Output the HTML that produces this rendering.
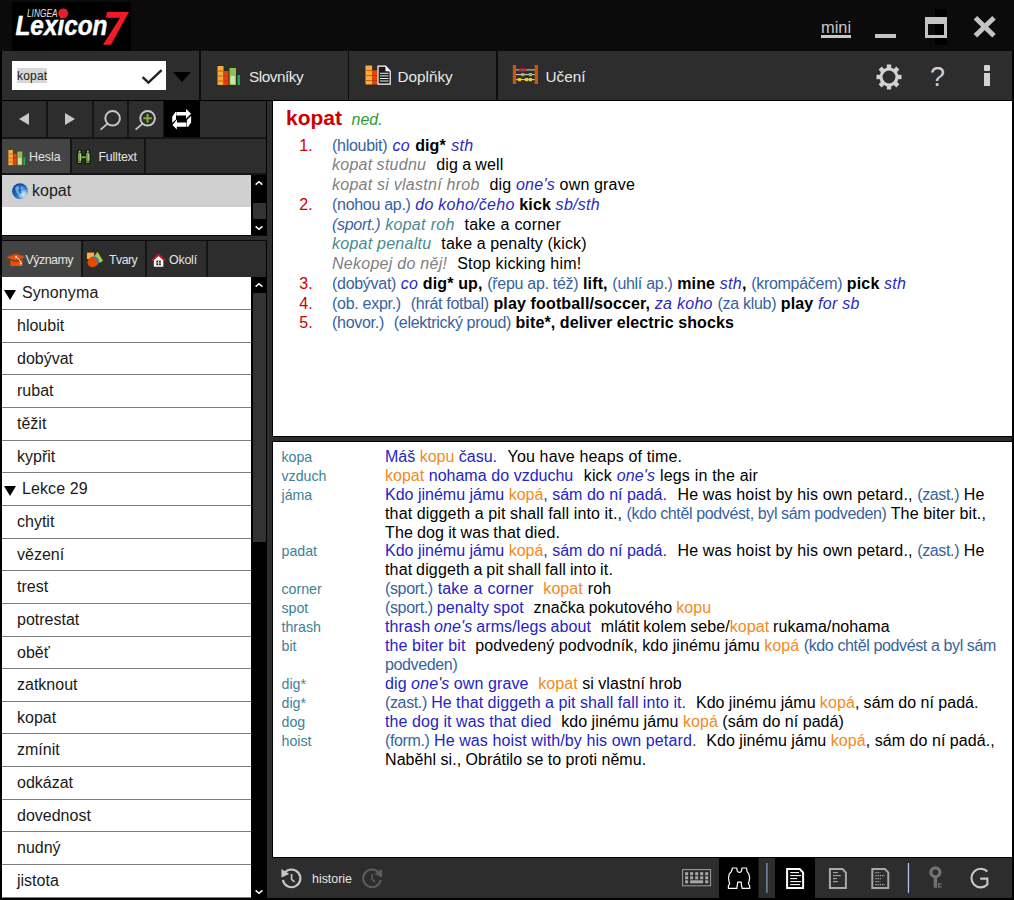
<!DOCTYPE html>
<html>
<head>
<meta charset="utf-8">
<title>Lingea Lexicon 7</title>
<style>
*{box-sizing:border-box;margin:0;padding:0}
html,body{width:1014px;height:900px;overflow:hidden;background:#000}
body{font-family:"Liberation Sans",sans-serif;position:relative;color:#000}
.abs{position:absolute}
#title{left:0;top:0;width:1014px;height:51px;background:#0b0b0b}
#logo{left:12px;top:2px;width:119px;height:49px;background:#000}
#toolbar{left:2px;top:51px;width:1010px;height:49px;background:#2d2d2d}
.vsep{position:absolute;width:1.6px;background:#0c0c0c;top:0;height:49px;margin-left:0.4px}
.tbtn{position:absolute;top:0;height:49px;color:#e8e8e8;font-size:15.3px;line-height:51px}
#search{left:10px;top:10px;width:154px;height:29px;background:#fff}
#search span{position:absolute;left:5px;top:7px;height:15px;line-height:17px;letter-spacing:0.2px;font-size:12px;background:#d8d8d8;color:#222}
#mini{left:821px;top:12px;font-size:16.4px;line-height:30px;color:#c8c8c8;border-bottom:3px solid #c8c8c8;height:26px;width:30px;overflow:visible;white-space:nowrap}
#left{left:2px;top:101px;width:264px;height:799px;background:#2d2d2d}
#nav{left:0;top:0;width:264px;height:36px}
.nbtn{position:absolute;top:0;height:36px;border-right:2px solid #151515}
#tabs1{left:0;top:38px;width:264px;height:35px;border-top:0}
.tab{position:absolute;top:0;height:35px;color:#e4e4e4;font-size:12.4px;line-height:37.4px;border-right:2px solid #151515}
.tab.on{background:#444}
#list1{left:0;top:74px;width:249px;height:59.6px;background:#fff}
#list1 .sel{position:absolute;left:0;top:0;width:249px;height:32px;background:#d0d0d0}
.sb{position:absolute;background:#000;width:16px}
.thumb{position:absolute;left:1.5px;width:13px;background:#333}
#tabs2{left:0;top:140.4px;width:264px;height:35.5px}
#tabs2 .tab{line-height:39.4px}
#list2{left:0;top:176.3px;width:249px;height:624px;background:#fff;overflow:hidden}
.row{height:32.667px;border-bottom:1px solid #7c7c7c;font-size:16px;line-height:32px;padding-left:15px;color:#1a1a1a;white-space:nowrap;position:relative}
.row.h{padding-left:20px;letter-spacing:0.1px}
.row.h:before{content:"";position:absolute;left:1.5px;top:12.5px;border-left:6.5px solid transparent;border-right:6.5px solid transparent;border-top:10.5px solid #000}
#gap{left:267px;top:101px;width:6px;height:757px;background:#2d2d2d;border-right:1px solid #000}
#p1{left:273px;top:100px;width:739px;height:337px;background:#fff;border-top:1px solid #000;border-bottom:1px solid #000}
#p2{left:273px;top:441px;width:739px;height:417px;background:#fff;border-top:1px solid #000;border-bottom:1px solid #000}
#hgap{left:267px;top:437px;width:745px;height:4px;background:#2d2d2d}
#rgap{left:1012px;top:51px;width:2px;height:849px;background:#000}
#bottom{left:273px;top:858px;width:739px;height:40px;background:#2d2d2d}

.hw{left:13px;top:4.5px;white-space:nowrap;height:24px;line-height:24px}
.hw b{font-size:21px;color:#cc0000}
.hw i{font-size:16px;color:#2f9a2f;margin-left:9.5px}
.e1{left:59px;top:34.6px;font-size:16px;white-space:nowrap;color:#000;letter-spacing:0.19px}
.ln{height:19.76px;line-height:19.76px;position:relative}
.n{position:absolute;left:-32.7px;color:#cc0000;letter-spacing:0}
.g{color:#3762a0}
.e1 .g{letter-spacing:-0.29px}
.e1 b{letter-spacing:0.14px}
.e1 i{letter-spacing:0.27px}
i.b,.b{color:#2a2ac0}
i.x{color:#808080}
i.t{color:#4a8a8c}
.e1 .sp{display:inline-block;width:9.9px}
.e2 .sp{display:inline-block;width:9.7px}
.e2 .en .sp{width:10.5px}
.e2{left:112px;top:5.8px;font-size:16px;white-space:nowrap;color:#000}
.l2{height:18.94px;line-height:18.94px;position:relative}
.k{position:absolute;left:-103.5px;color:#3d8296;font-size:14.2px}
.c{color:#2424c4;letter-spacing:0}
.e2{letter-spacing:0.08px}
.l2.en{letter-spacing:0.15px}
.l2 .c{letter-spacing:0.12px}
.l2.en .c{letter-spacing:0}
.e2 .g{letter-spacing:-0.36px}
.e2 .k{letter-spacing:0}
.o{color:#f28a1e}
</style>
</head>
<body>
<div id="title" class="abs">
  <div class="abs" style="left:935px;top:9px;width:12px;height:36px;background:#000"></div>
  <div class="abs" id="mini">mini</div>
  <div class="abs" style="left:875px;top:34px;width:21px;height:4px;background:#c4c4c4"></div>
  <div class="abs" style="left:925px;top:17px;width:22px;height:21px;border:3px solid #c4c4c4;border-top-width:7px"></div>
  <svg class="abs" style="left:972px;top:14px" width="26" height="26" viewBox="0 0 26 26"><path d="M3.4 3.8 L22 21.8 M22 3.8 L3.4 21.8" stroke="#c4c4c4" stroke-width="5" fill="none"/></svg>
</div>
<div id="logo" class="abs">
  <svg width="119" height="49" viewBox="12 2 119 49" style="display:block">
    <text x="27" y="16.6" font-family="Liberation Sans, sans-serif" font-style="italic" font-size="10.2" fill="#e4e4e4" textLength="30.5" lengthAdjust="spacingAndGlyphs">LINGEA</text>
    <text x="15.5" y="34.7" font-family="Liberation Sans, sans-serif" font-style="italic" font-weight="bold" font-size="28" fill="#fff" textLength="92" lengthAdjust="spacingAndGlyphs" stroke="#fff" stroke-width="0.45">Lexicon</text>
    <circle cx="63.2" cy="13.3" r="4.9" fill="#ed1c24"/>
    <polygon points="107,12 129,12 111,44.75 103,44.75 120,17.75 105.9,17.75" fill="#ed1c24"/>
  </svg>
</div>
<div id="toolbar" class="abs">
  <div id="search" class="abs"><span>kopat</span>
    <svg class="abs" style="left:128px;top:7px" width="24" height="18" viewBox="0 0 24 18"><path d="M2.6 9.2 L8.4 14.6 L21.6 2.2" stroke="#222" stroke-width="2.4" fill="none"/></svg>
  </div>
  <div class="abs" style="left:171px;top:21px;width:0;height:0;border-left:9.5px solid transparent;border-right:9.5px solid transparent;border-top:10px solid #000"></div>
  <div class="vsep" style="left:197px"></div>
  <div class="tbtn" style="left:199px;width:148px">
    <svg class="abs" style="left:15.5px;top:15px" width="24" height="20" viewBox="0 0 24 20">
      <rect x="0.5" y="0" width="6" height="19" fill="#fbab3c"/><rect x="0.5" y="4.5" width="6" height="1" fill="#c4640c"/><rect x="0.5" y="9.5" width="6" height="1" fill="#c4640c"/><rect x="0.5" y="14.5" width="6" height="1" fill="#c4640c"/>
      <rect x="7" y="5" width="4.5" height="14" fill="#e0440e"/><rect x="7" y="9.5" width="4.5" height="1" fill="#b9350a"/><rect x="7" y="14.5" width="4.5" height="1" fill="#b9350a"/>
      <rect x="12.5" y="2" width="6.5" height="17" fill="#8cc152"/><rect x="13.5" y="10" width="4.5" height="8" fill="#cfe6a8"/>
      <rect x="20.5" y="9" width="2.5" height="10" fill="#1ea64b"/>
    </svg>
    <span class="abs" style="left:48px;top:0;letter-spacing:-0.45px">Slovníky</span>
  </div>
  <div class="vsep" style="left:345.5px"></div>
  <div class="tbtn" style="left:347.5px;width:147px">
    <svg class="abs" style="left:15px;top:13.5px" width="27" height="20" viewBox="364.5 64.5 27 20">
      <rect x="365" y="65" width="6.6" height="19" fill="#fbab3c"/><path d="M365 70 H371.6 M365 75 H371.6 M365 80 H371.6" stroke="#c4640c" stroke-width="1"/>
      <rect x="371.6" y="69.8" width="5.3" height="14.2" fill="#e2480c"/><path d="M371.6 75 H376.9 M371.6 80 H376.9" stroke="#b8380a" stroke-width="1"/>
      <path d="M377.5 65.6 H385 L389.7 70.8 V83.6 H377.5 Z" fill="#1c1c1c" stroke="#fff" stroke-width="1.2"/>
      <path d="M385 65.6 L389.7 70.8 H385 Z" fill="#fff"/>
      <path d="M379.4 72.8 H388 M379.4 75.4 H388 M379.4 78 H388 M379.4 80.5 H388" stroke="#f0f0f0" stroke-width="1"/>
    </svg>
    <span class="abs" style="left:48px;top:0">Doplňky</span>
  </div>
  <div class="vsep" style="left:494px"></div>
  <div class="tbtn" style="left:496px;width:120px">
    <svg class="abs" style="left:13.5px;top:14px" width="28" height="20" viewBox="511 65 28 20">
      <path d="M515 69.9 H534 M515 74.6 H534 M515 79.6 H534" stroke="#e6e6e6" stroke-width="0.9"/>
      <rect x="511.8" y="65" width="3.3" height="19" fill="#c8560e"/><rect x="533.7" y="65" width="3.3" height="19" fill="#c8560e"/>
      <g fill="#dc1430"><rect x="518" y="68.3" width="3.2" height="3.2"/><rect x="521.9" y="68.3" width="3.2" height="3.2"/></g>
      <g fill="#8cc04c"><rect x="520.1" y="73" width="3.2" height="3.2"/><rect x="527.8" y="73" width="3.2" height="3.2"/></g>
      <g fill="#f4cc10"><rect x="516.9" y="78" width="3.2" height="3.2"/><rect x="523.9" y="78" width="3.2" height="3.2"/><rect x="527.8" y="78" width="3.2" height="3.2"/></g>
    </svg>
    <span class="abs" style="left:47.5px;top:0">Učení</span>
  </div>
  <svg class="abs" style="left:872px;top:11px" width="30" height="30" viewBox="-15 -15 30 30">
    <g fill="#d2d2d2">
      <g id="teeth"><rect x="-2.2" y="-12.5" width="4.4" height="5" /><rect x="-2.2" y="7.5" width="4.4" height="5"/><rect x="-12.5" y="-2.2" width="5" height="4.4"/><rect x="7.5" y="-2.2" width="5" height="4.4"/></g>
      <use href="#teeth" transform="rotate(45)"/>
    </g>
    <circle r="8" fill="none" stroke="#d2d2d2" stroke-width="3.1"/>
  </svg>
  <div class="abs" style="left:925.5px;top:11.2px;width:20px;height:30px;font-size:27px;line-height:30px;color:#d2d2d2;text-align:center">?</div>
  <div class="abs" style="left:982.3px;top:14.2px;width:6px;height:5.4px;background:#d2d2d2;border-radius:1px"></div>
  <div class="abs" style="left:982.3px;top:22.4px;width:6px;height:12.2px;background:#d2d2d2"></div>
</div>
<div id="left" class="abs">
  <div id="nav" class="abs">
    <div class="nbtn" style="left:0;width:46px"><div class="abs" style="left:16.5px;top:12px;border-top:6px solid transparent;border-bottom:6px solid transparent;border-right:10px solid #c8c8c8"></div></div>
    <div class="nbtn" style="left:46px;width:45.5px"><div class="abs" style="left:16.5px;top:12px;border-top:6px solid transparent;border-bottom:6px solid transparent;border-left:10px solid #c8c8c8"></div></div>
    <div class="nbtn" style="left:91.5px;width:35.5px">
      <svg class="abs" style="left:-1.5px;top:0" width="36" height="36" viewBox="92 101 36 36"><circle cx="112.6" cy="118.3" r="7.3" fill="none" stroke="#c8c8c8" stroke-width="2"/><path d="M107.6 123.6 L100.6 129.6" stroke="#c8c8c8" stroke-width="1.8"/></svg>
    </div>
    <div class="nbtn" style="left:127px;width:35.5px">
      <svg class="abs" style="left:-2.4px;top:0" width="36" height="36" viewBox="92 101 36 36"><circle cx="112.6" cy="118.3" r="7.3" fill="none" stroke="#c8c8c8" stroke-width="2"/><path d="M107.6 123.6 L100.6 129.6" stroke="#c8c8c8" stroke-width="1.8"/><path d="M108.4 118.3 H116.8 M112.6 114.1 V122.5" stroke="#88ac34" stroke-width="2.1"/></svg>
    </div>
    <div class="nbtn" style="left:162px;width:36px;background:#000;border-right:0">
      <svg class="abs" style="left:1px;top:1px" width="35" height="35" viewBox="165 102 35 35" fill="#fff">
        <path d="M176.3 111.9 H186 V109 L191.1 113.7 L186 118.7 V115.6 H176.3 Z"/>
        <path d="M175.4 112 L176 112 L176 119.6 L172.2 122.7 L172.2 116.8 Z"/>
        <path d="M186.4 122.6 H177 V119.5 L172.4 124.9 L176.8 129.6 V126.7 H186.4 Z"/>
        <path d="M191.1 116 L191.1 122.2 L188.3 126.7 L186.9 126.7 L186.9 119.9 Z"/>
      </svg>
    </div>
  </div>
  <div class="abs" style="left:0;top:36px;width:264px;height:2px;background:#151515"></div>
  <div id="tabs1" class="abs">
    <div class="tab on" style="left:0;width:70px"><svg class="abs" style="left:6px;top:10.5px" width="18" height="16" viewBox="0 0 24 20" preserveAspectRatio="none">
      <rect x="0.5" y="0" width="6" height="19" fill="#fbab3c"/><rect x="0.5" y="4.5" width="6" height="1" fill="#c4640c"/><rect x="0.5" y="9.5" width="6" height="1" fill="#c4640c"/><rect x="0.5" y="14.5" width="6" height="1" fill="#c4640c"/>
      <rect x="7" y="5" width="4.5" height="14" fill="#e0440e"/><rect x="7" y="9.5" width="4.5" height="1" fill="#b9350a"/>
      <rect x="12.5" y="2" width="6.5" height="17" fill="#8cc152"/><rect x="13.5" y="10" width="4.5" height="8" fill="#cfe6a8"/>
      <rect x="20.5" y="9" width="2.5" height="10" fill="#1ea64b"/>
    </svg><span class="abs" style="left:27px;top:0">Hesla</span></div>
    <div class="tab" style="left:70px;width:74px">
      <svg class="abs" style="left:4.3px;top:9.9px" width="15" height="15.5" viewBox="76.5 148.5 15 15.5">
        <g fill="#78a04e" stroke="#0e1808" stroke-width="1.3" stroke-linejoin="round">
        <rect x="82" y="155.1" width="4.2" height="3.2"/>
        <path d="M78.7 149.6 H81.5 V151.8 L82.3 152.9 V163.1 H77.7 V152.9 L78.7 151.8 Z"/>
        <path d="M86.9 149.6 H89.7 V151.8 L90.5 152.9 V163.1 H85.9 V152.9 L86.9 151.8 Z"/>
        </g>
        <rect x="82" y="155.7" width="4.2" height="2" fill="#78a04e"/>
        <rect x="80.5" y="153.2" width="1.2" height="7" fill="#a8d47c"/><rect x="88.7" y="153.2" width="1.2" height="7" fill="#a8d47c"/>
        <path d="M78.3 160.9 H81.7 M86.5 160.9 H89.9" stroke="#2c4a1a" stroke-width="0.7"/>
        <rect x="79.3" y="150.2" width="1.6" height="1.3" fill="#98c46c"/><rect x="87.5" y="150.2" width="1.6" height="1.3" fill="#98c46c"/>
      </svg>
      <span class="abs" style="left:26.5px;top:0;letter-spacing:-0.2px">Fulltext</span></div>
  </div>
  <div class="abs" style="left:0;top:72px;width:264px;height:2px;background:#151515"></div>
  <div id="list1" class="abs"><div class="sel"></div>
    <svg class="abs" style="left:10px;top:7.7px" width="16" height="16.4" viewBox="0 0 16 16">
      <defs><radialGradient id="gl" cx="0.72" cy="0.72" r="0.75"><stop offset="0" stop-color="#d8ecff"/><stop offset="0.25" stop-color="#9cc6ee"/><stop offset="0.55" stop-color="#2f78c4"/><stop offset="1" stop-color="#0a4a9a"/></radialGradient></defs>
      <circle cx="8" cy="8" r="7.9" fill="url(#gl)"/>
      <path d="M3.2 4.2 Q5 2.4 7.2 2.6 L6.4 4.4 L7.6 5.6 L6 7 L6.8 9 L5.6 10.6 Q4.4 9.4 4.2 7.6 Q2.8 6.4 3.2 4.2 Z" fill="#7fb4ea" opacity="0.85"/>
      <path d="M8.6 3 Q11 2.6 12.8 4.6 L12 6.2 L10.4 5.8 L9.6 7.4 L8.4 6 Z" fill="#6aa4e2" opacity="0.8"/>
      <path d="M7 5.2 L9 6.6 L8.6 8.6 L10 10 L8.4 10.4 L7.2 8.4 Z M3 9.4 L4.6 11.4 L4 12.6 Z" fill="#0b4796" opacity="0.75"/>
    </svg>
    <span class="abs" style="left:30px;top:7px;font-size:16px;line-height:18px;color:#1c1c24">kopat</span>
  </div>
  <div class="sb" style="left:249px;top:74px;height:60px">
    <svg class="abs" style="left:4px;top:5px" width="9" height="6" viewBox="0 0 9 6"><path d="M0.6 4.6 L4 1.7 L7.4 4.6" stroke="#fff" stroke-width="1.5" fill="none"/></svg>
    <div class="thumb" style="top:28px;height:16px"></div>
    <svg class="abs" style="left:4px;top:50px" width="9" height="6" viewBox="0 0 9 6"><path d="M0.6 1.4 L4 4.3 L7.4 1.4" stroke="#fff" stroke-width="1.5" fill="none"/></svg>
  </div>
  <div class="abs" style="left:0;top:133.6px;width:265px;height:6.8px;background:#2d2d2d;border-top:1.5px solid #0a0a0a;border-bottom:1.5px solid #0a0a0a"></div>
  <div id="tabs2" class="abs">
    <div class="tab on" style="left:0;width:81px;height:35.5px">
      <svg class="abs" style="left:3.7px;top:11.4px" width="20" height="14" viewBox="5.5 252.5 20 14">
        <polygon points="5.9,256.9 15.4,253.2 24.9,256.7 15.4,260.6" fill="#ea4e08"/>
        <path d="M9.9 259.4 L15.4 261.4 L22.1 258.8 V265.6 H9.9 Z" fill="#ea4e08"/>
        <path d="M10.6 259.3 Q15.4 262.6 21.4 258.9" stroke="#6a3420" stroke-width="0.6" fill="none" opacity="0.7"/>
        <path d="M15.7 256.6 Q19.4 258.6 20.6 262.4" stroke="#f6ece4" stroke-width="0.9" fill="none"/><circle cx="15.6" cy="256.6" r="1.05" fill="#f8f0e8"/><circle cx="20.4" cy="263" r="1.1" fill="#eef0ff"/>
        <g fill="#3a6ad0"><rect x="8.4" y="254.4" width="1" height="1"/><rect x="21.6" y="254.4" width="1" height="1"/><rect x="10.2" y="264.8" width="1" height="1"/><rect x="20.8" y="264.8" width="1" height="1"/></g>
      </svg>
      <span class="abs" style="left:23.5px;top:0;letter-spacing:-0.5px">Významy</span></div>
    <div class="tab" style="left:81px;width:64px;height:35.5px">
      <svg class="abs" style="left:3px;top:9.8px" width="18" height="18" viewBox="86 250.5 18 18">
        <rect x="87" y="252.1" width="7.1" height="6.4" fill="#fbb03a"/>
        <polygon points="97.5,251.3 103,260.2 100.4,262 90,262" fill="#a6cc4c"/>
        <circle cx="93.7" cy="260.9" r="5.2" fill="#2a78e0"/>
        <circle cx="92.4" cy="261.9" r="4.9" fill="#e44a04"/>
      </svg>
      <span class="abs" style="left:26px;top:0;letter-spacing:-0.55px">Tvary</span></div>
    <div class="tab" style="left:145px;width:61px;height:35.5px">
      <svg class="abs" style="left:3.6px;top:11.7px" width="15.15" height="15.15" viewBox="150 252.5 16 16">
        <path d="M153 259.5 L158 255 L163 259.5 V267 H153 Z" fill="#fff"/>
        <path d="M151.2 260.6 L158 254.3 L164.8 260.6" stroke="#e0101c" stroke-width="2" fill="none" stroke-linejoin="miter"/>
        <rect x="155.6" y="260.6" width="4.8" height="4.8" fill="#222"/><path d="M158 260.6 V265.4 M155.6 263 H160.4" stroke="#fff" stroke-width="0.8"/>
      </svg>
      <span class="abs" style="left:22px;top:0;letter-spacing:-0.2px">Okolí</span></div>
  </div>
  <div id="list2" class="abs">
<div class="row h">Synonyma</div><div class="row">hloubit</div><div class="row">dobývat</div><div class="row">rubat</div><div class="row">těžit</div><div class="row">kypřit</div><div class="row h">Lekce 29</div><div class="row">chytit</div><div class="row">vězení</div><div class="row">trest</div><div class="row">potrestat</div><div class="row">oběť</div><div class="row">zatknout</div><div class="row">kopat</div><div class="row">zmínit</div><div class="row">odkázat</div><div class="row">dovednost</div><div class="row">nudný</div><div class="row">jistota</div>
  </div>
  <div class="sb" style="left:249px;top:175.6px;height:622px">
    <svg class="abs" style="left:4px;top:5.5px" width="9" height="6" viewBox="0 0 9 6"><path d="M0.6 4.6 L4 1.7 L7.4 4.6" stroke="#fff" stroke-width="1.5" fill="none"/></svg>
    <div class="thumb" style="top:16.5px;height:249px"></div>
    <svg class="abs" style="left:4px;top:612px" width="9" height="6" viewBox="0 0 9 6"><path d="M0.6 1.4 L4 4.3 L7.4 1.4" stroke="#fff" stroke-width="1.5" fill="none"/></svg>
  </div>
</div>
<div id="gap" class="abs"></div>
<div id="hgap" class="abs"></div>
<div id="rgap" class="abs"></div>
<div id="p1" class="abs">
  <div class="abs hw"><b>kopat</b><i>ned.</i></div>
  <div class="abs e1">
    <div class="ln" style="word-spacing:0.59px"><span class="n">1.</span><span class="g">(hloubit)</span> <i class="b">co</i> <b>dig*</b> <i class="b">sth</i></div>
    <div class="ln" style="word-spacing:-0.59px"><i class="x">kopat studnu</i><span class="sp"></span>dig a well</div>
    <div class="ln" style="word-spacing:-0.12px"><i class="x">kopat si vlastní hrob</i><span class="sp"></span>dig <i class="b">one's</i> own grave</div>
    <div class="ln"><span class="n">2.</span><span class="g">(nohou ap.)</span> <i class="b">do koho/čeho</i> <b>kick</b> <i class="b">sb/sth</i></div>
    <div class="ln" style="word-spacing:0.25px"><i class="g">(sport.)</i> <i class="t">kopat roh</i><span class="sp"></span>take a corner</div>
    <div class="ln" style="word-spacing:-0.24px"><i class="t">kopat penaltu</i><span class="sp"></span>take a penalty (kick)</div>
    <div class="ln"><i class="x">Nekopej do něj!</i><span class="sp"></span>Stop kicking him!</div>
    <div class="ln"><span class="n">3.</span><span class="g">(dobývat)</span> <i class="b">co</i> <b>dig* up,</b> <span class="g">(řepu ap. též)</span> <b>lift,</b> <span class="g">(uhlí ap.)</span> <b>mine</b> <i class="b">sth</i><b>,</b> <span class="g">(krompáčem)</span> <b>pick</b> <i class="b">sth</i></div>
    <div class="ln"><span class="n">4.</span><span class="g">(ob. expr.)</span><span class="sp"></span><span class="g">(hrát fotbal)</span> <b>play football/soccer,</b> <i class="b">za koho</i> <span class="g">(za klub)</span> <b>play</b> <i class="b">for sb</i></div>
    <div class="ln" style="word-spacing:-0.25px"><span class="n">5.</span><span class="g">(hovor.)</span><span class="sp"></span><span class="g">(elektrický proud)</span> <b>bite*, deliver electric shocks</b></div>
  </div>
</div>
<div id="p2" class="abs">
  <div class="abs e2">
    <div class="l2 en"><span class="k">kopa</span><span class="c">Máš <span class="o">kopu</span> času.</span><span class="sp"></span>You have heaps of time.</div>
    <div class="l2 en" style="word-spacing:0.19px"><span class="k">vzduch</span><span class="c"><span class="o">kopat</span> nohama do vzduchu</span><span class="sp"></span>kick <i class="b">one's</i> legs in the air</div>
    <div class="l2 en"><span class="k">jáma</span><span class="c">Kdo jinému jámu <span class="o">kopá</span>, sám do ní padá.</span><span class="sp"></span>He was hoist by his own petard., <span class="g">(zast.)</span> He</div>
    <div class="l2 en" style="word-spacing:-0.13px">that diggeth a pit shall fall into it., <span class="g">(kdo chtěl podvést, byl sám podveden)</span> The biter bit.,</div>
    <div class="l2 en" style="word-spacing:-0.60px">The dog it was that died.</div>
    <div class="l2 en"><span class="k">padat</span><span class="c">Kdo jinému jámu <span class="o">kopá</span>, sám do ní padá.</span><span class="sp"></span>He was hoist by his own petard., <span class="g">(zast.)</span> He</div>
    <div class="l2 en" style="word-spacing:-0.77px">that diggeth a pit shall fall into it.</div>
    <div class="l2" style="word-spacing:0.45px"><span class="k">corner</span><span class="g">(sport.)</span> <span class="c">take a corner</span><span class="sp"></span><span class="o">kopat</span> roh</div>
    <div class="l2" style="word-spacing:-0.58px"><span class="k">spot</span><span class="g">(sport.)</span> <span class="c">penalty spot</span><span class="sp"></span>značka pokutového <span class="o">kopu</span></div>
    <div class="l2" style="word-spacing:-0.74px"><span class="k">thrash</span><span class="c">thrash <i>one's</i> arms/legs about</span><span class="sp"></span>mlátit kolem sebe/<span class="o">kopat</span> rukama/nohama</div>
    <div class="l2" style="word-spacing:-0.08px"><span class="k">bit</span><span class="c">the biter bit</span><span class="sp"></span>podvedený podvodník, kdo jinému jámu <span class="o">kopá</span> <span class="g">(kdo chtěl podvést a byl sám</span></div>
    <div class="l2"><span class="g">podveden)</span></div>
    <div class="l2" style="word-spacing:-0.18px"><span class="k">dig*</span><span class="c">dig <i>one's</i> own grave</span><span class="sp"></span><span class="o">kopat</span> si vlastní hrob</div>
    <div class="l2" style="word-spacing:-0.31px"><span class="k">dig*</span><span class="g">(zast.)</span> <span class="c">He that diggeth a pit shall fall into it.</span><span class="sp"></span>Kdo jinému jámu <span class="o">kopá</span>, sám do ní padá.</div>
    <div class="l2" style="word-spacing:-0.18px"><span class="k">dog</span><span class="c">the dog it was that died</span><span class="sp"></span>kdo jinému jámu <span class="o">kopá</span> (sám do ní padá)</div>
    <div class="l2" style="word-spacing:-0.11px"><span class="k">hoist</span><span class="g">(form.)</span> <span class="c">He was hoist with/by his own petard.</span><span class="sp"></span>Kdo jinému jámu <span class="o">kopá</span>, sám do ní padá.,</div>
    <div class="l2" style="word-spacing:-0.24px">Naběhl si., Obrátilo se to proti němu.</div>
  </div>
</div>
<div id="bottom" class="abs">
  <svg class="abs" style="left:6.2px;top:8px" width="25.6" height="25.6" viewBox="280 867 24 24">
    <path d="M285.1 873.6 A8.3 8.3 0 1 1 283.6 880.2" fill="none" stroke="#c8c8c8" stroke-width="2"/>
    <polygon points="282.3,869.8 289.6,874.4 282.3,877.8" fill="#c8c8c8"/>
    <path d="M291.8 874.6 V879.6 L294.6 881.8" fill="none" stroke="#c8c8c8" stroke-width="1.5"/>
  </svg>
  <span class="abs" style="left:39px;top:12.5px;font-size:12.4px;line-height:16px;color:#e4e4e4">historie</span>
  <svg class="abs" style="left:86.4px;top:8px" width="25.6" height="25.6" viewBox="0 0 24 24">
    <path d="M18.9 6.6 A8.3 8.3 0 1 0 20.4 13.2" fill="none" stroke="#5c5c5c" stroke-width="2"/>
    <polygon points="21.7,2.8 14.4,7.4 21.7,10.8" fill="#5c5c5c"/>
    <path d="M12.2 7.6 V12.6 L15 14.8" fill="none" stroke="#5c5c5c" stroke-width="1.5"/>
  </svg>
  <svg class="abs" style="left:387px;top:0" width="354" height="42" viewBox="660 858 354 42">
    <rect x="719" y="858" width="39.5" height="40" fill="#000"/>
    <rect x="775" y="858" width="40" height="40" fill="#000"/>
    <rect x="682.6" y="869.6" width="28" height="16.2" fill="none" stroke="#a0a0a0" stroke-width="1"/>
    <g fill="#a8a8a8"><rect x="685.1" y="872.2" width="3" height="3"/><rect x="690.1" y="872.2" width="3" height="3"/><rect x="695.2" y="872.2" width="3" height="3"/><rect x="700.2" y="872.2" width="3" height="3"/><rect x="705.2" y="872.2" width="3" height="3"/><rect x="685.1" y="876.3" width="3" height="3"/><rect x="690.1" y="876.3" width="3" height="3"/><rect x="695.2" y="876.3" width="3" height="3"/><rect x="700.2" y="876.3" width="3" height="3"/><rect x="705.2" y="876.3" width="3" height="3"/><rect x="685.1" y="880.3" width="3" height="3"/><rect x="705.2" y="880.3" width="3" height="3"/><rect x="690.1" y="880.3" width="13" height="3"/></g>
    <path d="M732.4 868 L736.8 868 L737.2 871.1 L738.8 872.4 L740.1 872.4 L741.5 871.1 L741.9 868 L746.6 868 L747 871.5 L748.8 873.8 L749.7 877.8 L749 881.7 L748.3 883.5 L749.7 885.7 L749.7 888.4 L742.1 888.4 L741.5 885.7 L741.2 882.2 L737.7 882.2 L737.2 885.7 L736.8 888.4 L728.4 888.4 L728.4 885.7 L729.7 883.5 L729.1 881.7 L728.5 877.8 L729.3 873.8 L731.5 871.5 Z" fill="none" stroke="#fff" stroke-width="1.2" stroke-linejoin="round"/>
    <rect x="766.2" y="863" width="1.4" height="29.8" fill="#7f8eb0"/>
    <path d="M787.1 869 H799.7 L803.1 872.6 V887.9 H787.1 Z" fill="none" stroke="#fff" stroke-width="2"/><path d="M790.2 872.6 H799.1" stroke="#fff" stroke-width="1.1"/><path d="M790.2 875.6 H801.1" stroke="#fff" stroke-width="1.1"/><path d="M790.2 878.6 H797.1" stroke="#fff" stroke-width="1.1"/><path d="M790.2 881.6 H801.1" stroke="#fff" stroke-width="1.1"/><path d="M790.2 884.6 H800.1" stroke="#fff" stroke-width="1.1"/>
    <path d="M829.9 869 H842.5 L845.9 872.6 V887.9 H829.9 Z" fill="none" stroke="#a8a8a8" stroke-width="2"/><path d="M833.0 872.6 H837.9" stroke="#a8a8a8" stroke-width="1.1"/><path d="M833.0 875.6 H840.9" stroke="#a8a8a8" stroke-width="1.1"/><path d="M833.0 878.6 H836.9" stroke="#a8a8a8" stroke-width="1.1"/><path d="M833.0 881.6 H837.9" stroke="#a8a8a8" stroke-width="1.1"/>
    <path d="M872.3 869 H884.9 L888.3 872.6 V887.9 H872.3 Z" fill="none" stroke="#a8a8a8" stroke-width="2"/><path d="M875.4 872.6 H880.3" stroke="#a8a8a8" stroke-width="1.1" stroke-dasharray="1.3 0.9"/><path d="M875.4 875.6 H884.8" stroke="#a8a8a8" stroke-width="1.1" stroke-dasharray="1.3 0.9"/><path d="M875.4 878.6 H880.8" stroke="#a8a8a8" stroke-width="1.1" stroke-dasharray="1.3 0.9"/><path d="M875.4 881.6 H880.3" stroke="#a8a8a8" stroke-width="1.1" stroke-dasharray="1.3 0.9"/><path d="M875.4 884.6 H884.8" stroke="#a8a8a8" stroke-width="1.1" stroke-dasharray="1.3 0.9"/>
    <rect x="907.8" y="863" width="1.3" height="29.8" fill="#b4c4ee"/>
    <circle cx="935.4" cy="872.3" r="4.5" fill="none" stroke="#727272" stroke-width="3.2"/>
    <rect x="933.7" y="877.5" width="3.4" height="10.2" fill="#727272"/>
    <path d="M941.6 883.9 H938.6 V886.9 H941.6" fill="none" stroke="#727272" stroke-width="1.2"/>
    <path d="M987.4 871.6 A9.3 9.3 0 1 0 987.4 884.6 V878.6 H980.2" fill="none" stroke="#c8c8c8" stroke-width="2.1"/>
  </svg>
</div>
<div class="abs" style="left:0;top:898px;width:1014px;height:2px;background:#000"></div>
<div class="abs" style="left:267px;top:858px;width:6px;height:40px;background:#2d2d2d"></div>
</body>
</html>
